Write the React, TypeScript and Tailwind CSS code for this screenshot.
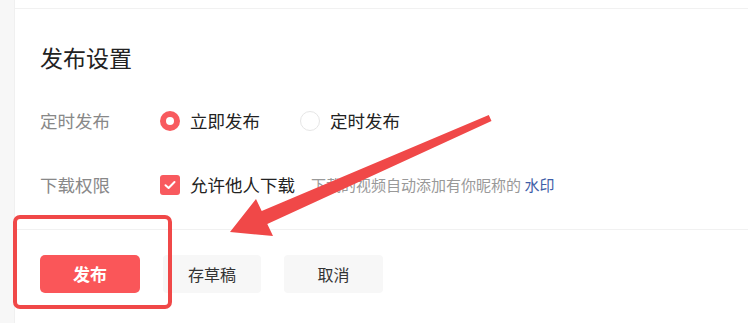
import React from "react";

const font = { fontFamily: '"Noto Sans CJK SC", "Noto Sans", sans-serif' };

export default function App() {
  return (
    <div
      className="relative w-[748px] h-[323px] overflow-hidden bg-white flex"
      style={font}
    >
      <div className="w-[15px] h-full bg-[#f7f7f7] border-r border-[#f0f0f0]" />
      <div className="flex-1 flex flex-col">
        <div className="h-[8px]" />
        <div className="border-t border-[#f1f1f1]" />
        <div className="pl-[25px] flex flex-col">
          <div className="mt-[32px] h-[32px] leading-[32px] text-[23px] text-[#222]">
            发布设置
          </div>
          <div className="mt-[28px] h-[40px] flex items-center">
            <div className="w-[120px] text-[17.5px] text-[#888]">定时发布</div>
            <div className="flex items-center gap-[10px]">
              <span className="w-5 h-5 rounded-full bg-[#f85a5e] flex items-center justify-center">
                <span className="w-2 h-2 rounded-full bg-white" />
              </span>
              <span className="text-[17.5px] text-[#222]">立即发布</span>
            </div>
            <div className="ml-[40px] flex items-center gap-[10px]">
              <span className="w-5 h-5 rounded-full border-[1.5px] border-[#e6e6e6] bg-white" />
              <span className="text-[17.5px] text-[#222]">定时发布</span>
            </div>
          </div>
          <div className="mt-[24px] h-[40px] flex items-center">
            <div className="w-[120px] text-[17.5px] text-[#888]">下载权限</div>
            <div className="flex items-center gap-[10px]">
              <span className="w-5 h-5 rounded-[3px] bg-[#f85a5e] flex items-center justify-center">
                <svg width="12" height="10" viewBox="0 0 12 10">
                  <path
                    d="M1.5 5.2 L4.6 8 L10.5 2"
                    fill="none"
                    stroke="white"
                    strokeWidth="2"
                    strokeLinecap="round"
                    strokeLinejoin="round"
                  />
                </svg>
              </span>
              <span className="text-[17.5px] text-[#222]">允许他人下载</span>
            </div>
            <div className="ml-[16px] text-[15px] text-[#999]">
              下载的视频自动添加有你昵称的 <span className="text-[#3f5ea8]">水印</span>
            </div>
          </div>
        </div>
        <div className="mt-[24px] border-t border-[#f1f1f1]" />
        <div className="pl-[25px] mt-[25px] flex gap-[23px]">
          <button className="w-[100px] h-[38px] rounded-[5px] bg-[#fa5659] text-white text-[17px] font-bold">
            发布
          </button>
          <button className="w-[98px] h-[38px] rounded-[4px] bg-[#f7f7f7] text-[#333] text-[16px]">
            存草稿
          </button>
          <button className="w-[99px] h-[38px] rounded-[4px] bg-[#f7f7f7] text-[#333] text-[16px]">
            取消
          </button>
        </div>
      </div>

      <div className="absolute left-[13px] top-[215px] w-[159px] h-[94px] border-[4px] border-[#f04848] rounded-[7px] pointer-events-none" />

      <svg
        className="absolute left-0 top-0 pointer-events-none"
        width="748"
        height="323"
        viewBox="0 0 748 323"
      >
        <polygon
          points="488.8,115 261.7,211.1 256,199 230,232 273,236 267.3,223.9 491.5,121"
          fill="#f04848"
        />
      </svg>
    </div>
  );
}
